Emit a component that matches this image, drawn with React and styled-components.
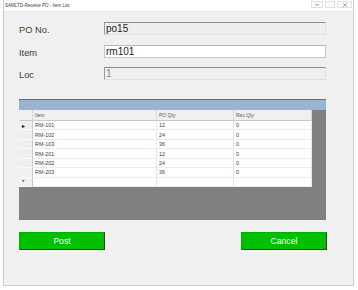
import React from 'react';
import styled, { createGlobalStyle } from 'styled-components';

const GlobalStyle = createGlobalStyle`
  html, body {
    margin: 0;
    padding: 0;
    background: #ffffff;
    font-family: "Liberation Sans", Arial, sans-serif;
  }
`;

const rows = [
  { item: 'RM-101', qty: 12, rec: 0 },
  { item: 'RM-102', qty: 24, rec: 0 },
  { item: 'RM-103', qty: 36, rec: 0 },
  { item: 'RM-201', qty: 12, rec: 0 },
  { item: 'RM-202', qty: 24, rec: 0 },
  { item: 'RM-203', qty: 36, rec: 0 },
];

const Page = styled.div`
  width: 358px;
  height: 290px;
  padding: 0 4px 4px 3px;
  box-sizing: border-box;
`;

const Window = styled.div`
  width: 351px;
  height: 286px;
  box-sizing: border-box;
  border: 1px solid #cfcfcf;
  border-top: none;
  background: #f0f0f0;
  display: flex;
  flex-direction: column;
`;

const TitleBar = styled.div`
  height: 11px;
  background: #ffffff;
  display: flex;
  align-items: center;
  justify-content: space-between;
  padding: 0 1px 0 1px;
  border-bottom: 1px solid #e6e6e6;
`;

const Title = styled.span`
  font-size: 4.5px;
  color: #3a3a3a;
`;

const Controls = styled.div`
  display: flex;
  align-items: center;
  gap: 2px;
  margin-top: -2px;
`;

const CtrlBox = styled.div`
  width: ${p => p.$w}px;
  height: 5px;
  border: 1px solid #e0e0e0;
  display: flex;
  align-items: center;
  justify-content: center;
  background: #fbfbfb;
`;

const Body = styled.div`
  flex: 1;
  display: flex;
  flex-direction: column;
  padding: 10px 27px 0 15px;
`;

const Form = styled.div`
  display: grid;
  grid-template-columns: 85px 222px;
  grid-auto-rows: 13px;
  row-gap: 9.5px;
  align-items: center;
`;

const Label = styled.label`
  font-size: 9.3px;
  color: #2b4a2b;
  padding-top: 3px;
`;

const Field = styled.div`
  height: 13px;
  box-sizing: border-box;
  display: flex;
  align-items: center;
  padding-left: 1px;
  font-size: 10px;
  color: ${p => (p.$muted ? '#8a8a8a' : '#1a1a1a')};
  background: ${p => (p.$editable ? '#ffffff' : '#efefef')};
  border: 1px solid ${p => (p.$editable ? '#c8c8c8' : '#e0e0e0')};
  border-top-color: ${p => (p.$editable ? '#b8b8b8' : '#8c8c8c')};
  border-left-color: ${p => (p.$editable ? '#c8c8c8' : '#9a9a9a')};
`;

const GridBox = styled.div`
  margin-top: 19px;
  width: 307px;
  height: 121px;
  box-sizing: border-box;
  background: #808080;
  border-top: 1px solid #6e6e6e;
  display: flex;
  flex-direction: column;
`;

const Caption = styled.div`
  height: 10px;
  background: #99b4d1;
`;

const Table = styled.div`
  width: 293px;
  display: grid;
  grid-template-columns: 14px 124px 77px 78px;
  grid-template-rows: 11px repeat(7, 9.45px);
  background: #ffffff;
`;

const HeadCell = styled.div`
  background: #f0f0f0;
  border-right: 1px solid #d8d8d8;
  border-bottom: 1px solid #c8c8c8;
  font-size: 5px;
  color: #555;
  display: flex;
  align-items: center;
  padding-left: 2px;
`;

const RowHead = styled.div`
  background: #f0f0f0;
  border-right: 1px solid #c8c8c8;
  border-bottom: 1px solid #fafafa;
  font-size: 6px;
  color: #000;
  display: flex;
  align-items: center;
  padding-left: 3px;
`;

const Cell = styled.div`
  border-right: 1px solid #e6e6e6;
  border-bottom: 1px solid #ececec;
  font-size: 5.4px;
  color: #3c3c3c;
  display: flex;
  align-items: center;
  padding-left: 2px;
  overflow: hidden;
`;

const Buttons = styled.div`
  margin-top: 12px;
  display: flex;
  justify-content: space-between;
  width: 308px;
`;

const Button = styled.button`
  width: 86px;
  height: 18px;
  box-sizing: border-box;
  background: #00c000;
  color: #ffffff;
  font-family: "Liberation Sans", Arial, sans-serif;
  font-size: 8.6px;
  border: 1px solid #00b000;
  border-right-color: #3c3c3c;
  border-bottom-color: #3c3c3c;
  padding: 0 0 1px;
`;

export default function App() {
  return (
    <Page>
      <GlobalStyle />
      <Window>
        <TitleBar>
          <Title>SAMLTD-Receive PO - Item List</Title>
          <Controls>
            <CtrlBox $w={10}>
              <svg width="4" height="2"><rect width="4" height="1.5" fill="#c0c0c0" /></svg>
            </CtrlBox>
            <CtrlBox $w={8} />
            <CtrlBox $w={13}>
              <svg width="4" height="4"><path d="M0 0L4 4M4 0L0 4" stroke="#b0b0b0" strokeWidth="1" /></svg>
            </CtrlBox>
          </Controls>
        </TitleBar>
        <Body>
          <Form>
            <Label>PO No.</Label>
            <Field>po15</Field>
            <Label>Item</Label>
            <Field $editable>rm101</Field>
            <Label>Loc</Label>
            <Field $muted>1</Field>
          </Form>
          <GridBox>
            <Caption />
            <Table>
              <HeadCell />
              <HeadCell>Item</HeadCell>
              <HeadCell>PO Qty</HeadCell>
              <HeadCell>Rec Qty</HeadCell>
              {rows.map((r, i) => (
                <React.Fragment key={r.item}>
                  <RowHead>{i === 0 ? '▸' : ''}</RowHead>
                  <Cell>{r.item}</Cell>
                  <Cell>{r.qty}</Cell>
                  <Cell>{r.rec}</Cell>
                </React.Fragment>
              ))}
              <RowHead>*</RowHead>
              <Cell />
              <Cell />
              <Cell />
            </Table>
          </GridBox>
          <Buttons>
            <Button>Post</Button>
            <Button>Cancel</Button>
          </Buttons>
        </Body>
      </Window>
    </Page>
  );
}
